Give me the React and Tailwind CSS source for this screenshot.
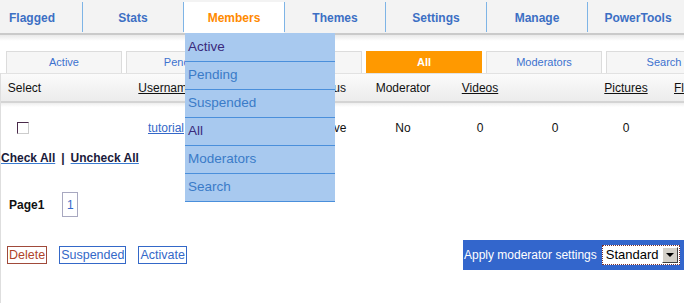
import React from "react";

const navItems = ["Flagged", "Stats", "Members", "Themes", "Settings", "Manage", "PowerTools"];
const subTabs = ["Active", "Pending", "Suspended", "All", "Moderators", "Search"];
const menu = [
  { label: "Active", visited: true },
  { label: "Pending" },
  { label: "Suspended" },
  { label: "All", visited: true },
  { label: "Moderators" },
  { label: "Search" },
];

// column widths tuned so header & cell centers line up with the screenshot
const cols = "grid grid-cols-[47px_236px_84px_70px_84px_66px_76px_60px]";

const App = () => {
  return (
    <div className="relative w-[684px] h-[303px] overflow-hidden bg-white font-['Liberation_Sans',Arial,sans-serif] text-[12px] text-black">
      {/* top nav */}
      <div className="relative h-[33px] bg-[#f3f3f3] flex -ml-[18px]">
        {navItems.map((item, i) => (
          <div key={item} className="flex">
            {i > 0 && <div className="w-px mt-[2px] h-[30px] bg-[#7eb4e6]" />}
            <div
              className={`w-[100px] mt-[2px] h-[31px] flex items-center justify-center font-bold text-[12px] ${
                item === "Members" ? "bg-white text-[#ff8a00]" : "text-[#3c6fc4]"
              }`}
            >
              {item}
            </div>
          </div>
        ))}
      </div>
      <div className="h-[2px] bg-[#cacaca]" />
      <div className="h-[6px] bg-gradient-to-b from-[#e9e9e9] to-white" />

      {/* sub tabs */}
      <div className="flex gap-[4px] pl-[6px] mt-[10px]">
        {subTabs.map((t) => (
          <div
            key={t}
            className={`w-[116px] shrink-0 h-[22px] flex items-center justify-center text-[11px] border border-b-0 ${
              t === "All"
                ? "bg-[#ff9900] border-[#ff9900] text-white font-bold"
                : "bg-[#f6f6f6] border-[#dcdcdc] text-[#3d72cf]"
            }`}
          >
            {t}
          </div>
        ))}
      </div>

      {/* table */}
      <div className="border-l border-[#dedede] h-[230px]">
        <div className={`${cols} w-max h-[28px] items-center bg-gradient-to-b from-[#fbfbfb] to-[#ececec] border-t border-[#e2e2e2] text-[12px] text-[#111]`}>
          <div className="text-center">Select</div>
          <div className="text-center underline">Username</div>
          <div className="text-center pl-[6px]">Status</div>
          <div className="text-center">Moderator</div>
          <div className="text-center underline">Videos</div>
          <div />
          <div className="text-center underline">Pictures</div>
          <div className="text-left pl-[10px] underline">Flags</div>
        </div>
        <div className="h-[2px] bg-[#d4d4d4]" />
        <div className="h-[4px] bg-gradient-to-b from-[#eeeeee] to-white" />

        <div className={`${cols} w-max h-[42px] items-center text-[12px] text-[#111]`}>
          <div className="flex justify-center -ml-[4px]">
            <div className="w-[12px] h-[12px] border border-[#4a2a4a] border-b-[#ccc] border-r-[#ccc] bg-white" />
          </div>
          <div className="text-center underline text-[#3468c8]">tutorial</div>
          <div className="text-center pl-[8px]">Active</div>
          <div className="text-center">No</div>
          <div className="text-center">0</div>
          <div className="text-center">0</div>
          <div className="text-center">0</div>
          <div />
        </div>

        <div className="flex items-center gap-[6px] font-bold text-[12px] text-[#1a1a3a]">
          <span className="underline decoration-[#3a7bd0]">Check All</span>
          <span>|</span>
          <span className="underline decoration-[#3a7bd0]">Uncheck All</span>
        </div>

        <div className="flex items-center mt-[25px] pl-[8px]">
          <span className="font-bold text-[12px] text-[#111]">Page1</span>
          <span className="ml-[18px] w-[16px] h-[25px] flex items-center justify-center border border-[#a8a8c0] text-[#3468c8] text-[12px]">
            1
          </span>
        </div>

        <div className="flex items-end justify-between mt-[23px]">
          <div className="flex gap-[12px] pl-[6px] pb-[6px] text-[12.5px]">
            <span className="border border-[#a04a3a] text-[#b0442a] px-px leading-[16px]">Delete</span>
            <span className="border border-[#3468c8] text-[#3468c8] px-px leading-[16px]">Suspended</span>
            <span className="border border-[#3468c8] text-[#3468c8] px-px leading-[16px]">Activate</span>
          </div>
          <div className="w-[221px] h-[30px] bg-[#3366cc] flex items-center pl-px gap-[5px]">
            <span className="text-white text-[12px] whitespace-nowrap">Apply moderator settings</span>
            <div className="flex items-center w-[78px] h-[20px] bg-white border border-[#7a3030] border-dotted">
              <span className="flex-1 pl-[3px] text-[13px] text-black">Standard</span>
              <span className="w-[16px] h-[16px] mr-px bg-[#d4d0c8] border border-white border-r-[#404040] border-b-[#404040] flex items-center justify-center">
                <span className="w-0 h-0 border-l-[4px] border-r-[4px] border-t-[4px] border-l-transparent border-r-transparent border-t-black" />
              </span>
            </div>
          </div>
        </div>
      </div>

      {/* members dropdown */}
      <div className="absolute left-[185px] top-[33px] w-[150px] pt-px bg-[#a8c9ef] text-[13.5px]">
        {menu.map((m) => (
          <div
            key={m.label}
            className={`h-[28px] flex items-center pl-[3px] border-b border-[#4a8fdb] ${
              m.visited ? "text-[#3a2a7c]" : "text-[#3a7bc8]"
            }`}
          >
            {m.label}
          </div>
        ))}
      </div>
    </div>
  );
};

export default App;
